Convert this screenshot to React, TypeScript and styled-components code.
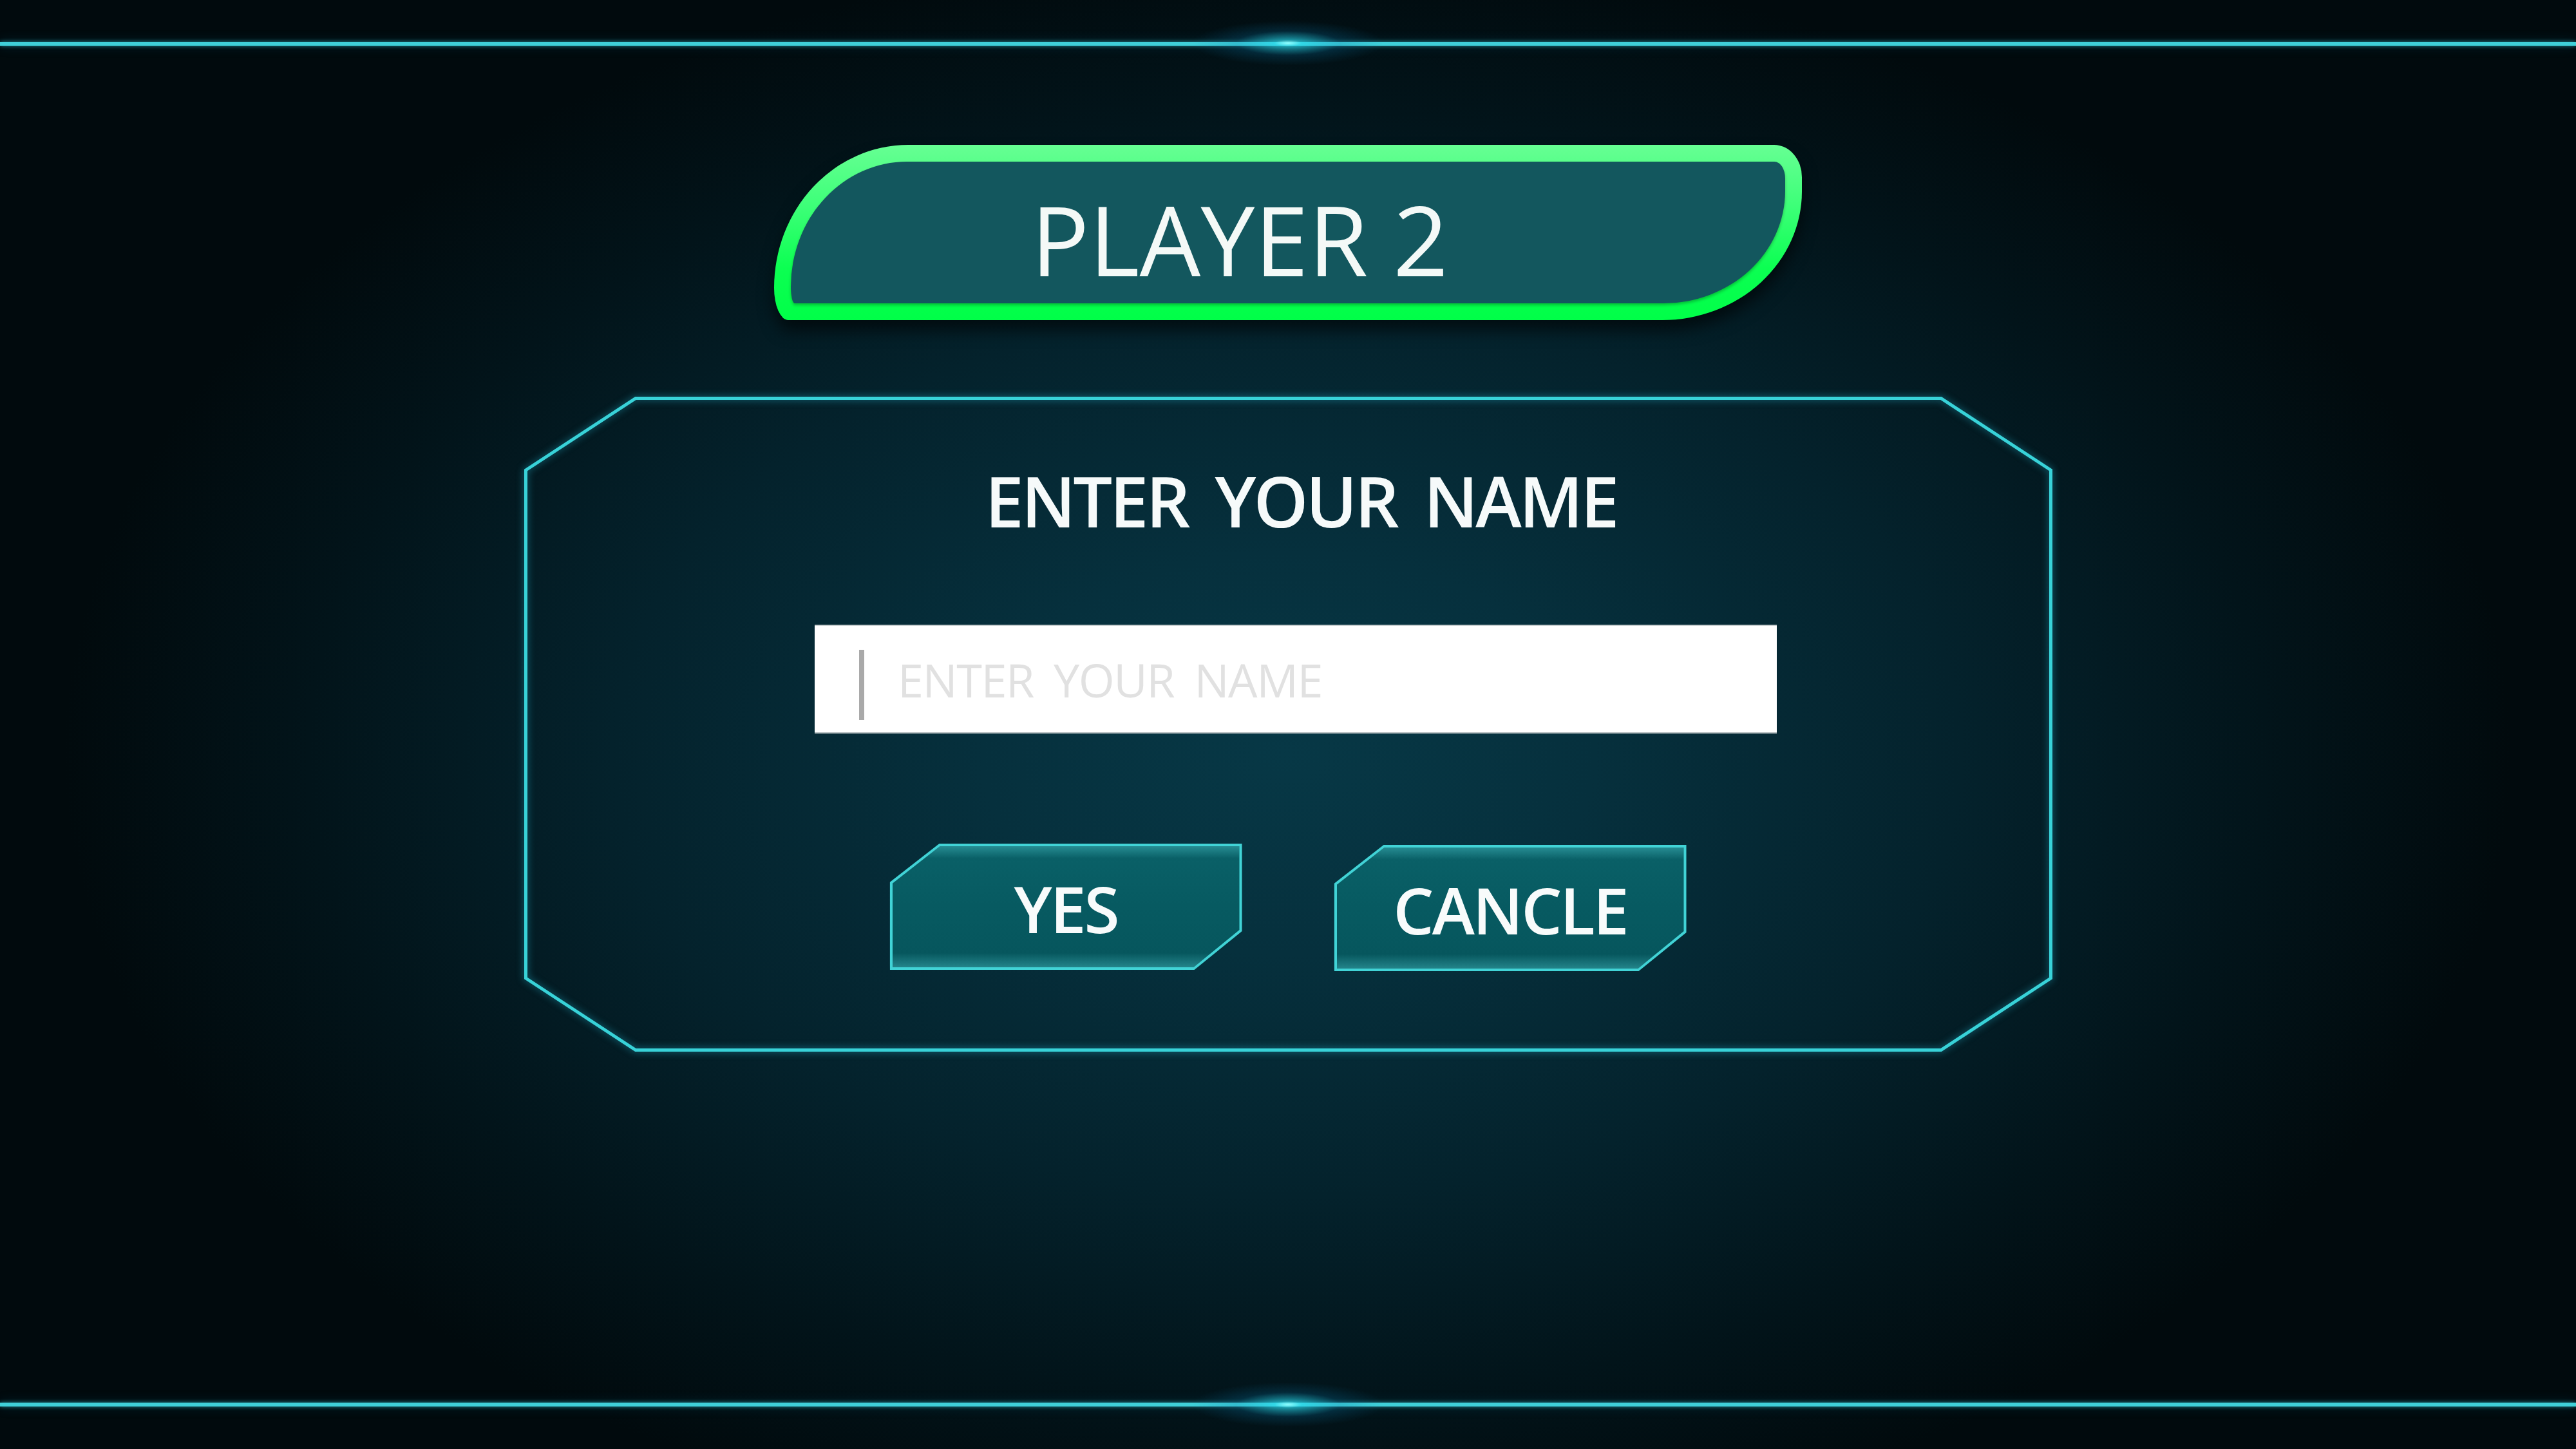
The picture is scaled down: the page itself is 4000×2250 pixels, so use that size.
import React from "react";
import styled, { createGlobalStyle } from "styled-components";

const GlobalStyle = createGlobalStyle`
  html, body {
    margin: 0;
    padding: 0;
    background: #01090c;
  }
  * { box-sizing: border-box; }
`;

const Screen = styled.div`
  width: 4000px;
  height: 2250px;
  overflow: hidden;
  display: flex;
  flex-direction: column;
  align-items: center;
  background:
    radial-gradient(ellipse 1900px 1250px at 50% 52%, #073846 0%, #06303d 25%, #04222c 55%, #02141a 80%, #010a0d 100%);
  font-family: "Open Sans", "Noto Sans", sans-serif;
`;

const GlowLine = styled.div`
  position: relative;
  width: 100%;
  height: 6px;
  flex: none;
  background: #3fcfd8;
  box-shadow: 0 0 6px rgba(60, 210, 225, 0.6), 0 0 18px rgba(30, 150, 190, 0.25);
  &::after {
    content: "";
    position: absolute;
    left: 50%;
    top: 50%;
    width: 300px;
    height: 70px;
    transform: translate(-50%, -50%);
    background: radial-gradient(ellipse at center, rgba(150, 255, 255, 0.95) 0%, rgba(40, 220, 240, 0.6) 10%, rgba(10, 120, 170, 0.22) 38%, rgba(0, 60, 90, 0) 70%);
    pointer-events: none;
  }
`;

const TopLine = styled(GlowLine)`
  margin-top: 65px;
  &::after {
    top: 30%;
  }
`;

const BottomLine = styled(GlowLine)`
  margin-top: auto;
  margin-bottom: 66px;
`;

const Badge = styled.div`
  margin-top: 154px;
  width: 1596px;
  height: 272px;
  padding: 26px;
  flex: none;
  border-radius: 208px 43px 217px 22px / 222px 50px 200px 50px;
  background: linear-gradient(180deg, #66ff93 0%, #3dff78 35%, #0cff52 70%, #00ff48 100%);
  box-shadow: 0 16px 24px rgba(0, 0, 0, 0.6);
`;

const BadgeFace = styled.div`
  width: 100%;
  height: 100%;
  border-radius: 182px 17px 191px 6px / 196px 26px 176px 26px;
  background: #13575e;
  box-shadow: 0 3px 4px rgba(0, 0, 0, 0.25);
  display: flex;
  align-items: center;
  justify-content: center;
  padding: 20px 150px 0 0;
  color: #f4f9f7;
  font-size: 150px;
  font-weight: 400;
  line-height: 1;
  letter-spacing: 0px;
`;

const Panel = styled.div`
  position: relative;
  margin-top: 119px;
  width: 2373px;
  height: 1017px;
  flex: none;
  display: flex;
  flex-direction: column;
  align-items: center;
`;

const PanelFrame = styled.svg`
  position: absolute;
  inset: 0;
  width: 100%;
  height: 100%;
  overflow: visible;
  pointer-events: none;
  filter: drop-shadow(0 0 6px rgba(40, 200, 230, 0.55));
`;

const Title = styled.h1`
  position: relative;
  margin: 108px 0 0 40px;
  color: #f6fafa;
  font-size: 108px;
  font-weight: 600;
  line-height: 1;
  word-spacing: 18px;
  letter-spacing: -4px;
`;

const InputBox = styled.label`
  position: relative;
  margin: 138px 0 0 24px;
  width: 1494px;
  height: 169px;
  background: #ffffff;
  box-shadow: inset 0 2px 0 #c9cfd0, inset 0 -2px 0 #b8c0c2;
  display: flex;
  align-items: center;
  padding-left: 69px;
`;

const Caret = styled.span`
  width: 8px;
  height: 109px;
  margin-top: 18px;
  background: #a9a9a9;
  flex: none;
`;

const NameInput = styled.input`
  border: none;
  outline: none;
  background: transparent;
  margin-left: 52px;
  padding: 0;
  flex: 1;
  height: 120px;
  font-family: "Open Sans", "Noto Sans", sans-serif;
  font-size: 72px;
  font-weight: 400;
  letter-spacing: -1.5px;
  word-spacing: 14px;
  color: #444;
  &::placeholder {
    color: #e1e1e1;
  }
`;

const ButtonRow = styled.div`
  position: relative;
  margin-top: 171px;
  display: flex;
  gap: 143px;
  align-items: flex-start;
`;

const ActionButton = styled.button<{ $drop?: number }>`
  width: 547px;
  height: 196px;
  margin-top: ${(p) => p.$drop ?? 0}px;
  border: none;
  padding: 4px;
  cursor: pointer;
  background: #41d3d6;
  clip-path: polygon(77px 0, 100% 0, 100% calc(100% - 60px), calc(100% - 74px) 100%, 0 100%, 0 60px);
  filter: drop-shadow(0 0 6px rgba(60, 220, 230, 0.5));
`;

const ButtonFace = styled.span`
  display: flex;
  width: 100%;
  height: 100%;
  align-items: center;
  justify-content: center;
  clip-path: polygon(74px 0, 100% 0, 100% calc(100% - 58px), calc(100% - 71px) 100%, 0 100%, 0 58px);
  background:
    linear-gradient(180deg, rgba(90, 220, 225, 0.35) 0%, rgba(90, 220, 225, 0) 10%, rgba(90, 220, 225, 0) 88%, rgba(90, 220, 225, 0.35) 100%),
    linear-gradient(180deg, #0a6168 0%, #075a61 50%, #06555c 100%);
  color: #f8fbfb;
  font-family: "Open Sans", "Noto Sans", sans-serif;
  font-size: 100px;
  font-weight: 600;
  letter-spacing: -3px;
  line-height: 1;
  padding-top: 4px;
`;

export default function App() {
  const w = 2373;
  const h = 1017;
  const cx = 173;
  const cy = 114;
  const s = 2.5;
  const points = [
    [cx, s],
    [w - cx, s],
    [w - s, cy],
    [w - s, h - cy],
    [w - cx, h - s],
    [cx, h - s],
    [s, h - cy],
    [s, cy],
  ]
    .map((p) => p.join(","))
    .join(" ");

  return (
    <>
      <GlobalStyle />
      <Screen>
        <TopLine />
        <Badge>
          <BadgeFace>PLAYER 2</BadgeFace>
        </Badge>
        <Panel>
          <PanelFrame viewBox={`0 0 ${w} ${h}`} preserveAspectRatio="none">
            <polygon points={points} fill="none" stroke="#38d2d8" strokeWidth={5} strokeLinejoin="miter" />
          </PanelFrame>
          <Title>ENTER YOUR NAME</Title>
          <InputBox>
            <Caret />
            <NameInput placeholder="ENTER YOUR NAME" />
          </InputBox>
          <ButtonRow>
            <ActionButton>
              <ButtonFace>YES</ButtonFace>
            </ActionButton>
            <ActionButton $drop={2}>
              <ButtonFace>CANCLE</ButtonFace>
            </ActionButton>
          </ButtonRow>
        </Panel>
        <BottomLine />
      </Screen>
    </>
  );
}
